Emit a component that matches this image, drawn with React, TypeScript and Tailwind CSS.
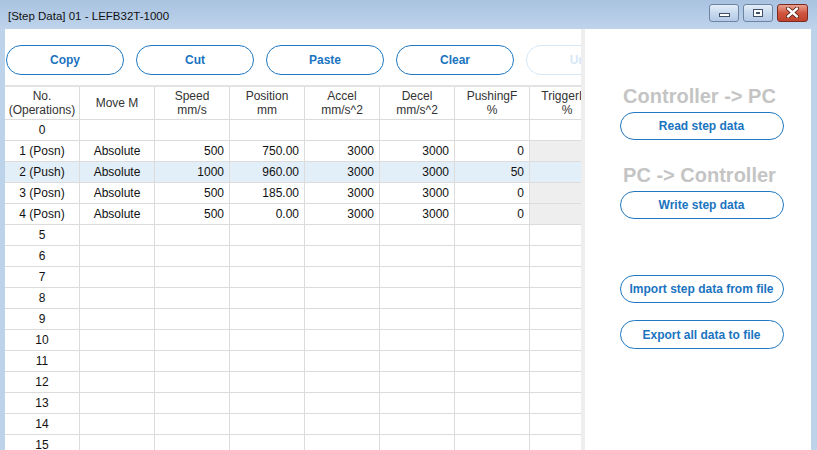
import React from "react";

const font = { fontFamily: '"Liberation Sans", Arial, sans-serif' };

type Row = {
  no: string;
  m?: string;
  sp?: string;
  pos?: string;
  acc?: string;
  dec?: string;
  push?: string;
  gray?: boolean;
  sel?: boolean;
};

const rows: Row[] = [
  { no: "0" },
  { no: "1 (Posn)", m: "Absolute", sp: "500", pos: "750.00", acc: "3000", dec: "3000", push: "0", gray: true },
  { no: "2 (Push)", m: "Absolute", sp: "1000", pos: "960.00", acc: "3000", dec: "3000", push: "50", gray: true, sel: true },
  { no: "3 (Posn)", m: "Absolute", sp: "500", pos: "185.00", acc: "3000", dec: "3000", push: "0", gray: true },
  { no: "4 (Posn)", m: "Absolute", sp: "500", pos: "0.00", acc: "3000", dec: "3000", push: "0", gray: true },
  ...Array.from({ length: 11 }, (_, i) => ({ no: String(i + 5) })),
];

function PillButton({ children, disabled, className = "" }: { children: React.ReactNode; disabled?: boolean; className?: string }) {
  return (
    <div
      className={
        "shrink-0 flex items-center justify-center rounded-full border-[1.5px] bg-white text-[12px] font-bold " +
        (disabled ? "border-[#d6e8f6] text-[#d6e8f6] " : "border-[#1f78c1] text-[#1a74bf] ") +
        className
      }
    >
      {children}
    </div>
  );
}

function HeaderCell({ l1, l2, w = "w-[75px]" }: { l1: string; l2?: string; w?: string }) {
  return (
    <div className={`${w} shrink-0 h-full border-r border-[#dcdcdc] flex flex-col items-center justify-center text-[12px] leading-[14px] text-[#333333] whitespace-nowrap overflow-hidden`}>
      <div>{l1}</div>
      {l2 && <div>{l2}</div>}
    </div>
  );
}

function Cell({ v, align = "right", bg = "" }: { v?: string; align?: "right" | "center"; bg?: string }) {
  return (
    <div
      className={
        "w-[75px] shrink-0 h-full border-r border-[#dcdcdc] flex items-center px-[5px] text-[12px] text-[#111111] " +
        (align === "center" ? "justify-center " : "justify-end ") +
        bg
      }
    >
      {v}
    </div>
  );
}

function WinBtn({ kind }: { kind: "min" | "max" | "close" }) {
  const base =
    kind === "close"
      ? "bg-gradient-to-b from-[#e8a18f] via-[#d0553f] to-[#c0412c] border-[#7a2a20]"
      : "bg-gradient-to-b from-[#e4eef9] via-[#c8d9ee] to-[#b3c9e4] border-[#6d84a3]";
  return (
    <div className={`${kind === "close" ? "w-[31px]" : "w-[30px]"} h-[18px] rounded-[3px] border ${base} flex items-center justify-center`}>
      {kind === "min" && <div className="w-[11px] h-[4px] bg-white border border-[#3f4f66] mt-[4px]" />}
      {kind === "max" && (
        <div className="w-[10px] h-[8px] border-[1.5px] border-[#3f4f66] bg-white flex items-center justify-center">
          <div className="w-[4px] h-[2px] bg-[#3f4f66]" />
        </div>
      )}
      {kind === "close" && (
        <svg width="13" height="11" viewBox="0 0 13 11">
          <path d="M2 1.5 L11 9.5 M11 1.5 L2 9.5" stroke="#4a1a12" strokeWidth="4" strokeLinecap="round" />
          <path d="M2 1.5 L11 9.5 M11 1.5 L2 9.5" stroke="#ffffff" strokeWidth="2.4" strokeLinecap="round" />
        </svg>
      )}
    </div>
  );
}

export default function App() {
  return (
    <div style={font} className="w-[817px] h-[450px] overflow-hidden bg-[#bcd3ea] flex flex-col">
      <div className="h-[29px] shrink-0 bg-gradient-to-b from-[#a8c2e0] to-[#bfd4eb] flex items-center justify-between pl-[8px] pr-[9px]">
        <div className="text-[11.5px] text-[#111111] mt-[5px]">[Step Data] 01 - LEFB32T-1000</div>
        <div className="flex items-center gap-[4px] -mt-[4px]">
          <WinBtn kind="min" />
          <WinBtn kind="max" />
          <WinBtn kind="close" />
        </div>
      </div>
      <div className="flex-1 flex ml-[5px] mr-[6px] bg-white min-h-0">
        <div className="w-[576px] shrink-0 overflow-hidden flex flex-col">
          <div className="flex gap-[12px] pl-[1px] pt-[16px] h-[46px] shrink-0">
            <PillButton className="w-[118px] h-[30px]">Copy</PillButton>
            <PillButton className="w-[118px] h-[30px]">Cut</PillButton>
            <PillButton className="w-[118px] h-[30px]">Paste</PillButton>
            <PillButton className="w-[118px] h-[30px]">Clear</PillButton>
            <PillButton disabled className="w-[118px] h-[30px]">Undo</PillButton>
          </div>
          <div className="mt-[10px] border-t-2 border-[#e3e3e3]">
            <div className="flex h-[33px] border-b border-[#dcdcdc]">
              <HeaderCell l1="No." l2="(Operations)" />
              <HeaderCell l1="Move M" />
              <HeaderCell l1="Speed" l2="mm/s" />
              <HeaderCell l1="Position" l2="mm" />
              <HeaderCell l1="Accel" l2="mm/s^2" />
              <HeaderCell l1="Decel" l2="mm/s^2" />
              <HeaderCell l1="PushingF" l2="%" />
              <HeaderCell l1="TriggerLV" l2="%" />
            </div>
            {rows.map((r) => (
              <div key={r.no} className={"flex h-[21px] border-b border-[#dcdcdc] " + (r.sel ? "bg-[#e2eef8]" : "")}>
                <Cell v={r.no} align="center" />
                <Cell v={r.m} align="center" />
                <Cell v={r.sp} />
                <Cell v={r.pos} />
                <Cell v={r.acc} />
                <Cell v={r.dec} />
                <Cell v={r.push} />
                <Cell bg={r.gray && !r.sel ? "bg-[#eeeeee]" : ""} />
              </div>
            ))}
          </div>
        </div>
        <div className="w-[4px] shrink-0 bg-[#eeeeee]" />
        <div className="flex-1 flex flex-col items-center">
          <div className="mt-[57px] h-[20px] leading-[20px] text-[20px] font-bold text-[#c4c4c4] pl-[3px]">Controller -&gt; PC</div>
          <PillButton className="mt-[6px] ml-[7px] w-[164px] h-[28px]">Read step data</PillButton>
          <div className="mt-[25px] h-[20px] leading-[20px] text-[20px] font-bold text-[#c4c4c4] pl-[3px]">PC -&gt; Controller</div>
          <PillButton className="mt-[6px] ml-[7px] w-[164px] h-[28px]">Write step data</PillButton>
          <PillButton className="mt-[56px] ml-[7px] w-[164px] h-[28px]">Import step data from file</PillButton>
          <PillButton className="mt-[17px] ml-[7px] w-[164px] h-[29px]">Export all data to file</PillButton>
        </div>
      </div>
    </div>
  );
}
